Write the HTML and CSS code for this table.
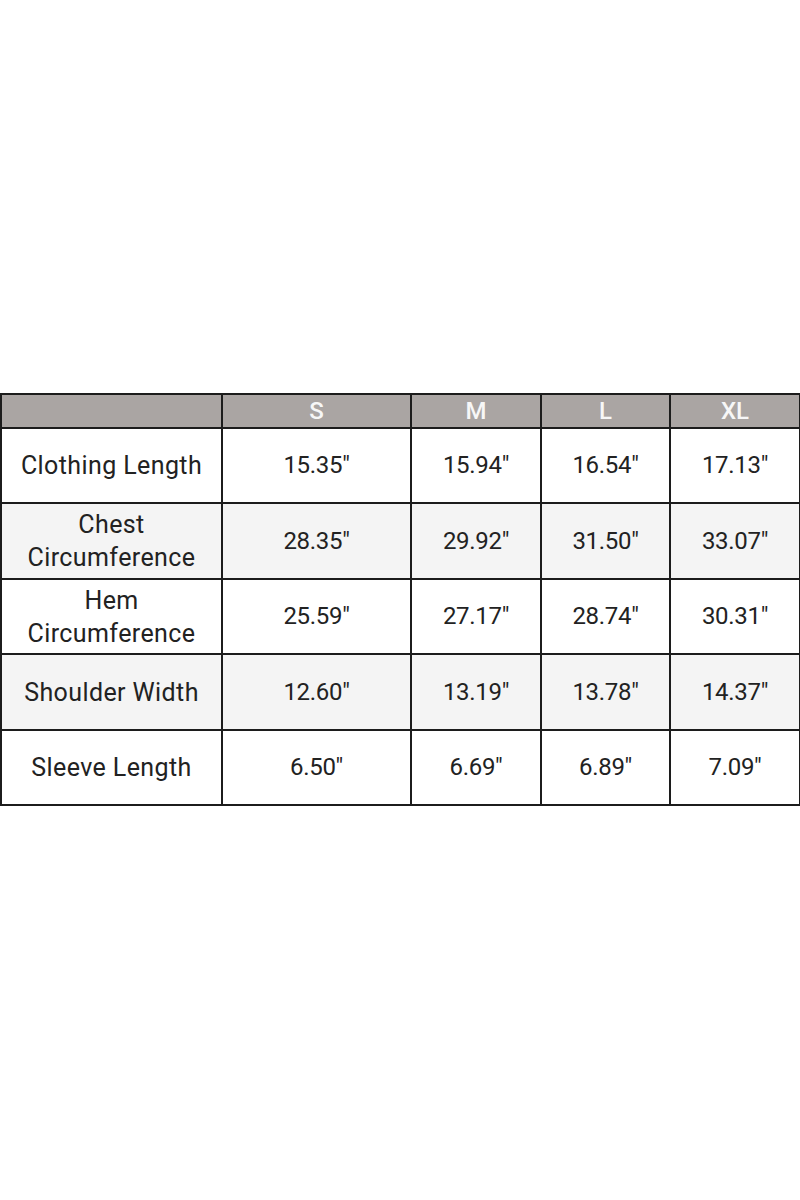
FILE: index.html
```html
<!DOCTYPE html>
<html>
<head>
<meta charset="utf-8">
<link rel="stylesheet" href="styles.css">
</head>
<body>
<div class="page">
  <table class="size-table">
    <colgroup>
      <col class="c-label">
      <col class="c-s">
      <col class="c-m">
      <col class="c-l">
      <col class="c-xl">
    </colgroup>
    <thead>
      <tr class="head">
        <th></th><th>S</th><th>M</th><th>L</th><th>XL</th>
      </tr>
    </thead>
    <tbody>
      <tr class="row">
        <td class="label">Clothing Length</td><td>15.35"</td><td>15.94"</td><td>16.54"</td><td>17.13"</td>
      </tr>
      <tr class="row alt">
        <td class="label">Chest<br>Circumference</td><td>28.35"</td><td>29.92"</td><td>31.50"</td><td>33.07"</td>
      </tr>
      <tr class="row">
        <td class="label">Hem<br>Circumference</td><td>25.59"</td><td>27.17"</td><td>28.74"</td><td>30.31"</td>
      </tr>
      <tr class="row alt">
        <td class="label">Shoulder Width</td><td>12.60"</td><td>13.19"</td><td>13.78"</td><td>14.37"</td>
      </tr>
      <tr class="row">
        <td class="label">Sleeve Length</td><td>6.50"</td><td>6.69"</td><td>6.89"</td><td>7.09"</td>
      </tr>
    </tbody>
  </table>
</div>
</body>
</html>
```
FILE: styles.css
```css
html, body {
  margin: 0;
  padding: 0;
  background: #ffffff;
}
.page {
  width: 800px;
  height: 1200px;
  padding-top: 393px;
  box-sizing: border-box;
}
.size-table {
  width: 799px;
  border-collapse: collapse;
  table-layout: fixed;
  font-family: Roboto, "Liberation Sans", Arial, sans-serif;
  color: #222222;
}
.c-label { width: 221px; }
.c-s { width: 189px; }
.c-m { width: 130px; }
.c-l { width: 129px; }
.c-xl { width: 130px; }
.size-table th,
.size-table td {
  border: 2px solid #1c1c1c;
  text-align: center;
  padding: 0;
}
.head th {
  background: #aaa5a3;
  color: #f7f7f7;
  height: 32px;
  font-size: 24px;
  font-weight: 500;
  line-height: 32px;
}
.row td {
  height: 73px;
  font-size: 24px;
  line-height: 33px;
  background: #ffffff;
  letter-spacing: -0.3px;
}
.row td.label {
  font-size: 25px;
  letter-spacing: 0.4px;
}
.row.alt td {
  height: 74px;
  background: #f4f4f4;
}
```
